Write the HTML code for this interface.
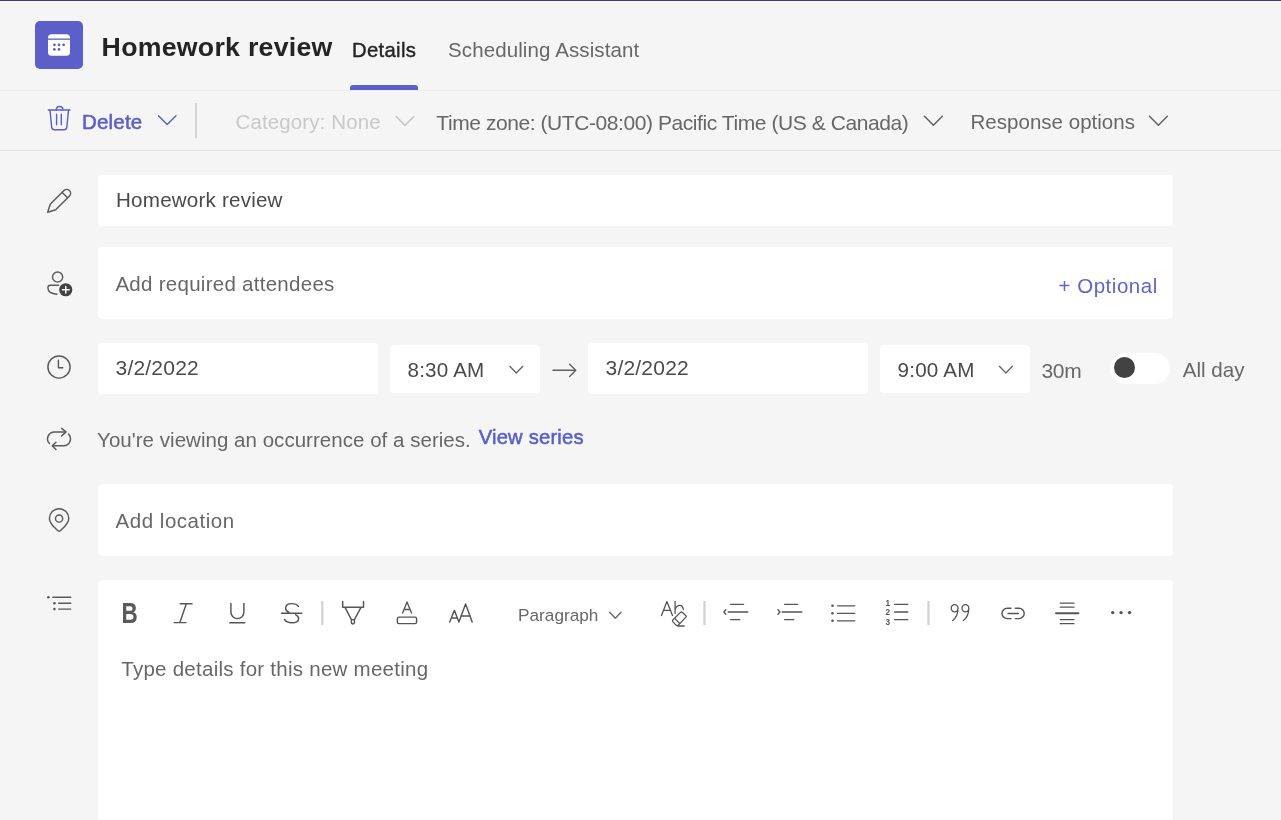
<!DOCTYPE html>
<html lang="en">
<head>
<meta charset="utf-8">
<title>Homework review</title>
<style>
*{box-sizing:border-box;margin:0;padding:0}
html,body{width:1281px;height:820px;overflow:hidden;background:#f5f5f5}
body{position:relative;will-change:transform;font-family:"Liberation Sans",sans-serif;font-size:20px;color:#424242}
.abs{position:absolute}
.t{position:absolute;white-space:nowrap;line-height:32px;height:32px}
.box{position:absolute;background:#fff;border-radius:4px}
.topline{left:0;top:0;width:1281px;height:1px;background:#3d3e5c}
.hdrline{left:0;top:90px;width:1281px;height:1px;background:#ededed}
.tbline{left:0;top:150px;width:1281px;height:1px;background:#e2e2e2}
.appicon{left:35px;top:21px;width:48px;height:48px;border-radius:5px;background:#5b5fc7}
.tabul{left:350px;top:85px;width:68px;height:5px;background:#5b5fc7;border-radius:3px 3px 0 0}
.sep{left:195.1px;top:102.8px;width:2px;height:35.6px;background:#d3d3d3}
svg{position:absolute;overflow:visible}
</style>
</head>
<body>
<div class="abs topline"></div>

<header>
<div class="abs appicon"></div>
<div class="t" style="left:101.60px;top:30.65px;font-size:26.7px;font-weight:bold;color:#242424;letter-spacing:0.271px;">Homework review</div>
<nav>
<div class="t" style="left:352.00px;top:33.67px;font-size:20.3px;color:#242424;letter-spacing:0.320px;-webkit-text-stroke:.4px #242424;">Details</div>
<div class="t" style="left:448.05px;top:33.60px;font-size:20.5px;color:#676767;letter-spacing:0.105px;">Scheduling Assistant</div>
<div class="abs tabul"></div>
</nav>
<div class="abs hdrline"></div>
</header>

<div class="toolbar">
<div class="t" style="left:82.00px;top:105.60px;font-size:20.5px;color:#5b5fc7;letter-spacing:0.200px;-webkit-text-stroke:.55px #5b5fc7;">Delete</div>
<div class="abs sep"></div>
<div class="t" style="left:235.50px;top:105.60px;font-size:20.5px;color:#c9c9c9;letter-spacing:0.117px;">Category: None</div>
<div class="t" style="left:436.30px;top:106.52px;font-size:21px;color:#676767;letter-spacing:-0.426px;">Time zone: (UTC-08:00) Pacific Time (US &amp; Canada)</div>
<div class="t" style="left:970.55px;top:105.60px;font-size:20.5px;color:#676767;letter-spacing:0.020px;">Response options</div>
<div class="abs tbline"></div>
</div>

<main>
<section class="row-title">
<div class="box" style="left:97.7px;top:175.1px;width:1075.3px;height:50.9px"></div>
<div class="t" style="left:116.05px;top:183.66px;font-size:20.6px;color:#4a4a4a;letter-spacing:0.200px;">Homework review</div>
</section>

<section class="row-attendees">
<div class="box" style="left:97.7px;top:247.2px;width:1075.3px;height:71.5px"></div>
<div class="t" style="left:115.40px;top:267.50px;font-size:20.5px;color:#676767;letter-spacing:0.277px;">Add required attendees</div>
<div class="t" style="left:1058.50px;top:270.40px;font-size:20.5px;color:#6165c9;letter-spacing:0.520px;">+ Optional</div>
</section>

<section class="row-datetime">
<div class="box" style="left:97.7px;top:343.1px;width:280px;height:50.5px"></div>
<div class="t" style="left:115.55px;top:351.52px;font-size:21px;color:#4a4a4a;letter-spacing:0.200px;">3/2/2022</div>
<div class="box" style="left:390.4px;top:345px;width:149.4px;height:47.9px"></div>
<div class="t" style="left:407.50px;top:353.56px;font-size:20.6px;color:#4a4a4a;letter-spacing:0.200px;">8:30 AM</div>
<div class="box" style="left:588.2px;top:343.1px;width:279.4px;height:50.5px"></div>
<div class="t" style="left:605.55px;top:351.52px;font-size:21px;color:#4a4a4a;letter-spacing:0.200px;">3/2/2022</div>
<div class="box" style="left:880.4px;top:345px;width:149.7px;height:47.9px"></div>
<div class="t" style="left:897.60px;top:353.56px;font-size:20.6px;color:#4a4a4a;letter-spacing:0.200px;">9:00 AM</div>
<div class="t" style="left:1041.40px;top:354.62px;font-size:21px;color:#676767;letter-spacing:-0.295px;">30m</div>
<div class="box" style="left:1110px;top:352.5px;width:59.5px;height:31px;border-radius:15.5px"></div>
<div class="abs" style="left:1114px;top:357px;width:21px;height:21px;border-radius:50%;background:#424242"></div>
<div class="t" style="left:1182.65px;top:354.46px;font-size:20.6px;color:#676767;letter-spacing:0.005px;">All day</div>
</section>

<section class="row-series">
<div class="t" style="left:97.10px;top:423.60px;font-size:20.5px;color:#676767;letter-spacing:0.033px;">You're viewing an occurrence of a series.</div>
<div class="t" style="left:478.70px;top:421.40px;font-size:20.2px;color:#5b5fc7;letter-spacing:0.200px;-webkit-text-stroke:.55px #5b5fc7;">View series</div>
</section>

<section class="row-location">
<div class="box" style="left:97.7px;top:484.3px;width:1075.3px;height:71.7px"></div>
<div class="t" style="left:115.55px;top:504.50px;font-size:20.5px;color:#676767;letter-spacing:0.527px;">Add location</div>
</section>

<section class="row-editor">
<div class="box" style="left:97.7px;top:580.4px;width:1075.3px;height:250px;border-radius:4px 4px 0 0"></div>
<div class="t" style="left:518.10px;top:598.54px;font-size:17.2px;color:#676767;letter-spacing:-0.002px;">Paragraph</div>
<div class="t" style="left:121.30px;top:652.50px;font-size:20.5px;color:#676767;letter-spacing:0.256px;">Type details for this new meeting</div>
</section>
</main>

<svg class="ico" width="1281" height="820" viewBox="0 0 1281 820" style="left:0;top:0" fill="none" stroke-linecap="round" stroke-linejoin="round">
<!-- app calendar glyph -->
<g stroke="none">
<rect x="48" y="34.2" width="22" height="21.6" rx="3.6" fill="#fff"/>
<rect x="48" y="38.5" width="22" height="1.3" fill="#5b5fc7"/>
<g fill="#5b5fc7"><circle cx="54.4" cy="44.8" r="1.4"/><circle cx="59" cy="44.8" r="1.4"/><circle cx="63.6" cy="44.8" r="1.4"/><circle cx="54.4" cy="49.4" r="1.4"/><circle cx="59" cy="49.4" r="1.4"/></g>
</g>
<!-- trash -->
<g stroke="#5b5fc7" stroke-width="1.4">
<path d="M48.3 110H69.9"/>
<path d="M56.3 109.9A3.3 3.4 0 0 1 62.9 109.9"/>
<path d="M50 110.3L51.7 127.4Q52 129.8 54.4 129.8H64.1Q66.5 129.8 66.8 127.4L68.5 110.3"/>
<path d="M56.6 114.2V124.8M61.3 114.2V124.8"/>
<path d="M158.5 115.8L167.2 124.6L176 115.8"/>
</g>
<!-- toolbar chevrons -->
<path d="M396.2 116.6L405 125.4L413.8 116.6" stroke="#c7c7c7" stroke-width="1.5"/>
<path d="M924.5 116.2L933.4 125.2L942.3 116.2" stroke="#616161" stroke-width="1.5"/>
<path d="M1149.5 116.2L1158.4 125.2L1167.3 116.2" stroke="#616161" stroke-width="1.5"/>

<!-- form icons -->
<g stroke="#5a5a5a" stroke-width="1.45">
<!-- pencil -->
<path d="M50.2 204.3L64 190.5A3.89 3.89 0 0 1 69.5 196L55.7 209.8L47.7 212.3Z"/>
<path d="M62.2 192.4L67.6 197.8"/>
<!-- person -->
<circle cx="57.6" cy="277" r="5.1"/>
<path d="M58.6 285.3H50.4Q47.9 285.3 47.9 287.8Q47.9 293.6 57 294.2"/>
<!-- clock -->
<circle cx="59" cy="367" r="11.1"/>
<path d="M58.4 360.3V367.8H62.8"/>
<!-- repeat -->
<path d="M61.6 428.4L66 431.9L61.6 436"/>
<path d="M65.6 431.9H54.4A6.9 6.9 0 0 0 49.5 443.6"/>
<path d="M56 442.2L52.2 445.7L56 449.5"/>
<path d="M52.6 445.7H63.6A6.9 6.9 0 0 0 68.4 433.9"/>
<!-- location -->
<path d="M59.1 508.7A9.7 9.7 0 0 1 68.8 518.4C68.8 523.4 63.6 527.6 60.3 530.8Q59.1 531.9 57.9 530.8C54.6 527.6 49.4 523.4 49.4 518.4A9.7 9.7 0 0 1 59.1 508.7Z"/>
<circle cx="59.1" cy="518.5" r="3.6"/>
<!-- list -->
<path d="M52.9 597.3H70.8M58.7 603.2H70.8M58.7 609.1H70.8"/>
</g>
<g fill="#5a5a5a" stroke="none">
<circle cx="48.4" cy="597.3" r="1.3"/><circle cx="54.4" cy="603.2" r="1.3"/><circle cx="54.4" cy="609.1" r="1.3"/>
<circle cx="65.75" cy="289.75" r="6.6" fill="#424242"/>
</g>
<path d="M65.75 286.4V293.1M62.4 289.75H69.1" stroke="#fff" stroke-width="1.5"/>

<!-- time chevrons + arrow -->
<g stroke="#616161" stroke-width="1.25">
<path d="M509.8 366.3L516.3 373L522.8 366.3"/>
<path d="M999.4 366.3L1005.9 373L1012.4 366.3"/>
<path d="M609.6 612.2L615.3 618.2L621 612.2"/>
<path d="M553 370.3H575.6M569.6 364.2L575.8 370.3L569.6 376.4" stroke-width="1.4"/>
</g>
</svg>

<svg class="ico" width="1281" height="820" viewBox="0 0 1281 820" style="left:0;top:0" fill="none" stroke-linecap="round" stroke-linejoin="round">
<!-- editor toolbar -->
<text x="0" y="0" transform="translate(121.6 623.2) scale(0.78 1)" font-family="Liberation Sans, sans-serif" font-weight="bold" font-size="28.8" fill="#595959" stroke="none">B</text>
<g stroke="#555" stroke-width="1.45">
<!-- italic -->
<path d="M180.2 603.8H192M174.2 622.6H186M186.3 603.8L179.9 622.6"/>
<!-- underline -->
<path d="M230.9 603.4V612.1A6.5 6.5 0 0 0 243.9 612.1V603.4M229.8 622.8H244.8"/>
<!-- strike -->
<path d="M298.4 606.4Q296.6 603.6 291.8 603.6Q285.6 603.6 285.6 608.2Q285.6 611 289 612.4M295.6 614.6Q298.6 616 298.6 618.4Q298.6 622.8 292 622.8Q286.4 622.8 284.6 619.4M281.6 613.2H301.8"/>
<!-- highlighter -->
<path d="M342.7 601.4V607.2H363.5V601.4M345 607.4L351.4 619.6H354.4L361 607.4M351.4 619.8V622.6Q351.4 623.9 352.9 623.9Q354.4 623.9 354.4 622.6V619.8"/>
<!-- font color -->
<path d="M402.6 613L407 601.9L411.5 613M404.2 609.5H409.9" stroke-width="1.35"/>
<rect x="397.4" y="617.1" width="19.2" height="6.5" rx="1.6"/>
<!-- font size -->
<path d="M449.7 622.1L454.4 610.3L458.9 622.1L465.6 603.9L472.2 622.1M451.6 618H457.2M461.6 616H470.4"/>
<!-- clear format Ab -->
<path d="M661.5 615.6L666.9 601.5L672.5 615.6M663.3 610.4H670.4M675.1 601.4V613.4M675.1 609.6Q676.4 605.4 679.8 605.4Q682.8 605.4 683.4 609.6" stroke-width="1.3"/>
<path d="M680.3 612.6Q681.4 611.5 682.5 612.6L685.7 615.5Q686.7 616.4 685.7 617.4L678.4 625.1Q677.2 626.2 676 625.1L673 621.9Q672 620.8 673 619.7Z" fill="#fff" stroke-width="1.3"/><path d="M674.7 618.4L679.7 623.5M677.6 626H684.2" stroke-width="1.3"/>
<!-- outdent -->
<path d="M730.6 604.3H743.6M728.2 612H747.8M730.6 619.6H739.8M725.8 609.8L723.9 612L725.8 614.2" stroke-width="1.35"/>
<!-- indent -->
<path d="M784.6 604.3H797.6M782.2 612H801.8M784.6 619.6H793.8M778 609.8L779.9 612L778 614.2" stroke-width="1.35"/>
<!-- bullets -->
<path d="M837.6 605.8H854.8M837.6 613.3H854.8M837.6 620.8H854.8" stroke-width="1.35"/>
<!-- numbered -->
<path d="M894.6 604.3H907.8M894.6 612H907.8M894.6 619.6H907.8" stroke-width="1.35"/>
<!-- quote -->
<path d="M958 608.2A3.4 3.6 0 1 1 951.2 608.2A3.4 3.6 0 1 1 958 608.2C958 614 956.4 617.6 952.6 620.4M968.8 608.2A3.4 3.6 0 1 1 962 608.2A3.4 3.6 0 1 1 968.8 608.2C968.8 614 967.2 617.6 963.4 620.4" stroke-width="1.3"/>
<!-- link -->
<path d="M1011 608.2H1007.2A5.2 5.2 0 0 0 1007.2 618.6H1011M1015.4 608.2H1019A5.2 5.2 0 0 1 1019 618.6H1015.4M1008 613.4H1018.4"/>
<!-- hr -->
<path d="M1060.2 603.2H1074M1060.2 607.2H1074M1060.2 619.6H1074M1060.2 623.7H1074" stroke-width="1.3"/>
<path d="M1056 613.2H1078.4" stroke-width="1.9"/>
</g>
<g fill="#555" stroke="none">
<circle cx="832.5" cy="605.8" r="1.3"/><circle cx="832.5" cy="613.3" r="1.3"/><circle cx="832.5" cy="620.8" r="1.3"/>
<circle cx="1112.7" cy="612.6" r="1.7"/><circle cx="1121.1" cy="612.6" r="1.7"/><circle cx="1129.5" cy="612.6" r="1.7"/>
<rect x="321.2" y="601" width="2.2" height="24" fill="#d1d1d1"/>
<rect x="703.4" y="601" width="2.2" height="24" fill="#d1d1d1"/>
<rect x="927.4" y="601" width="2.2" height="24" fill="#d1d1d1"/>
<g font-family="Liberation Sans, sans-serif" font-weight="bold" font-size="8.2" fill="#555">
<text x="885.6" y="606.4">1</text><text x="885.6" y="615.2">2</text><text x="885.6" y="624.6">3</text>
</g>
</g>
</svg>
</body>
</html>
